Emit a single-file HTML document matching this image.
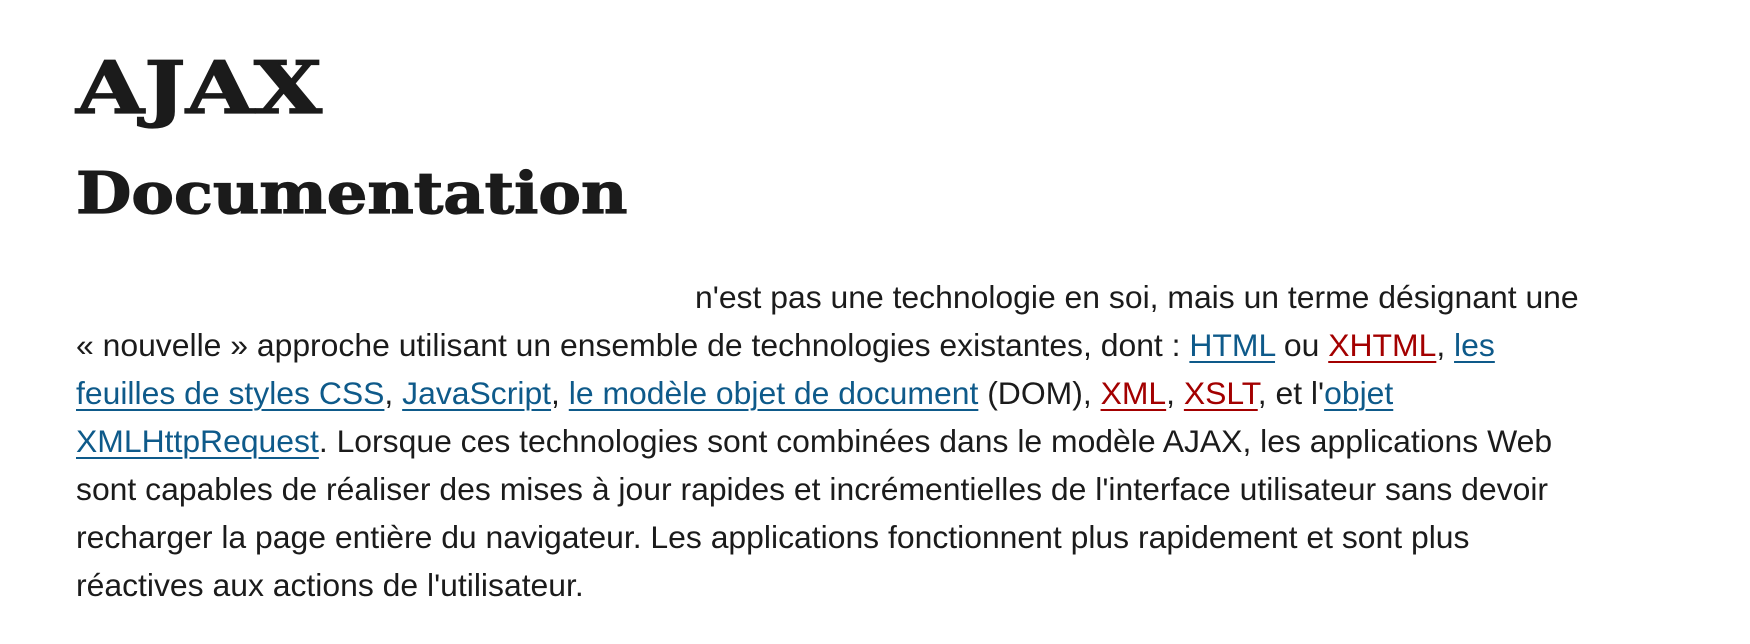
<!DOCTYPE html>
<html><head><meta charset="utf-8"><style>
body{margin:0;background:#fff;color:#1b1b1b;}
.h{font-family:"DejaVu Serif","Liberation Serif",serif;font-weight:bold;position:absolute;left:76px;margin:0;white-space:nowrap;transform-origin:0 0;-webkit-text-stroke:1.2px #1b1b1b;}
#h1{top:38px;font-size:72px;line-height:100px;transform:scaleX(1.22);}
#h2{top:154px;font-size:57px;line-height:80px;transform:scaleX(1.12);}
p{position:absolute;left:76px;top:273px;width:1515px;margin:0;font-family:"Liberation Sans",Arial,sans-serif;font-size:31.9px;line-height:48px;}
a{color:#0e5a8a;text-decoration:underline;text-decoration-thickness:1.5px;text-underline-offset:5px;}
a.r{color:#a30000;}
.sp{display:inline-block;width:619px;}
</style></head><body>
<div class="h" id="h1">AJAX</div>
<div class="h" id="h2">Documentation</div>
<p><span class="sp"></span>n'est pas une technologie en soi, mais un terme désignant une « nouvelle » approche utilisant un ensemble de technologies existantes, dont : <a href="#">HTML</a> ou <a class="r" href="#">XHTML</a>, <a href="#">les feuilles de styles CSS</a>, <a href="#">JavaScript</a>, <a href="#">le modèle objet de document</a> (DOM), <a class="r" href="#">XML</a>, <a class="r" href="#">XSLT</a>, et l'<a href="#">objet XMLHttpRequest</a>. Lorsque ces technologies sont combinées dans le modèle AJAX, les applications Web sont capables de réaliser des mises à jour rapides et incrémentielles de l'interface utilisateur sans devoir recharger la page entière du navigateur. Les applications fonctionnent plus rapidement et sont plus réactives aux actions de l'utilisateur.</p>
</body></html>
